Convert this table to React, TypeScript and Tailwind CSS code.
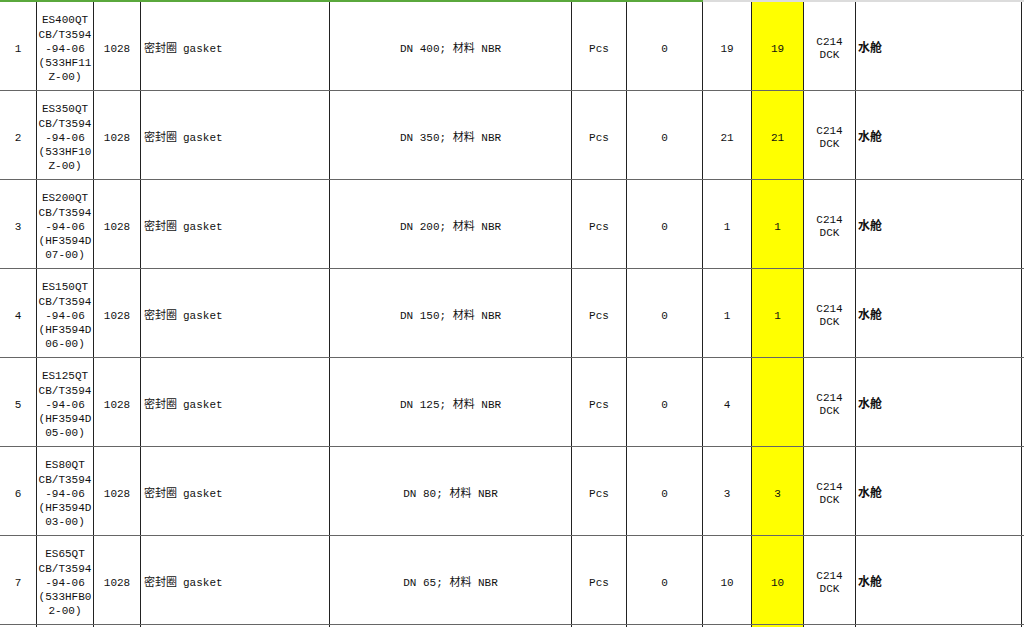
import React from "react";

interface Row {
  no: string;
  code: string[];
  qty: string;
  dn: string;
  stock: string;
  need: string;
}

const rows: Row[] = [
  { no: "1", code: ["ES400QT", "CB/T3594", "-94-06", "(533HF11", "Z-00)"], qty: "1028", dn: "DN 400; 材料 NBR", stock: "19", need: "19" },
  { no: "2", code: ["ES350QT", "CB/T3594", "-94-06", "(533HF10", "Z-00)"], qty: "1028", dn: "DN 350; 材料 NBR", stock: "21", need: "21" },
  { no: "3", code: ["ES200QT", "CB/T3594", "-94-06", "(HF3594D", "07-00)"], qty: "1028", dn: "DN 200; 材料 NBR", stock: "1", need: "1" },
  { no: "4", code: ["ES150QT", "CB/T3594", "-94-06", "(HF3594D", "06-00)"], qty: "1028", dn: "DN 150; 材料 NBR", stock: "1", need: "1" },
  { no: "5", code: ["ES125QT", "CB/T3594", "-94-06", "(HF3594D", "05-00)"], qty: "1028", dn: "DN 125; 材料 NBR", stock: "4", need: "" },
  { no: "6", code: ["ES80QT", "CB/T3594", "-94-06", "(HF3594D", "03-00)"], qty: "1028", dn: "DN 80; 材料 NBR", stock: "3", need: "3" },
  { no: "7", code: ["ES65QT", "CB/T3594", "-94-06", "(533HFB0", "2-00)"], qty: "1028", dn: "DN 65; 材料 NBR", stock: "10", need: "10" },
];

const cell = "flex items-center justify-center border-r border-[#222] pt-[6px] text-center";

const SheetRow: React.FC<{ row?: Row }> = ({ row }) => (
  <div className="grid h-[89px] grid-cols-[37px_57px_47px_189px_242px_55px_76px_49px_52px_52px_166px] border-b border-[#666]">
    <div className={cell}>{row?.no}</div>
    <div className={`${cell} flex-col leading-[14.3px]`}>
      {row?.code.map((line) => (
        <span key={line}>{line}</span>
      ))}
    </div>
    <div className={cell}>{row?.qty}</div>
    <div className={`${cell} justify-start pl-[3px]`}>
      {row && (
        <span>
          密封圈<span className="ml-[6px]">gasket</span>
        </span>
      )}
    </div>
    <div className={cell}>{row?.dn}</div>
    <div className={cell}>{row && "Pcs"}</div>
    <div className={cell}>{row && "0"}</div>
    <div className={cell}>{row?.stock}</div>
    <div className={`${cell} bg-[#ffff00]`}>{row?.need}</div>
    <div className={`${cell} flex-col leading-[13px]`}>
      {row && (
        <>
          <span>C214</span>
          <span>DCK</span>
        </>
      )}
    </div>
    <div className={`${cell} justify-start pl-[2px] text-[12px] font-bold`}>
      {row && "水舱"}
    </div>
  </div>
);

export default function App() {
  return (
    <div className="h-[627px] w-[1024px] overflow-hidden bg-white font-['Courier_New','Liberation_Mono','Nimbus_Mono_PS','Noto_Sans_CJK_SC',monospace] text-[11px] text-[#111]">
      <div className="flex h-[2px]">
        <div className="w-[703px] bg-[#5aa83c]" />
        <div className="flex-1 bg-[#dcdcdc]" />
      </div>
      {rows.map((r) => (
        <SheetRow key={r.no} row={r} />
      ))}
      <SheetRow />
    </div>
  );
}
